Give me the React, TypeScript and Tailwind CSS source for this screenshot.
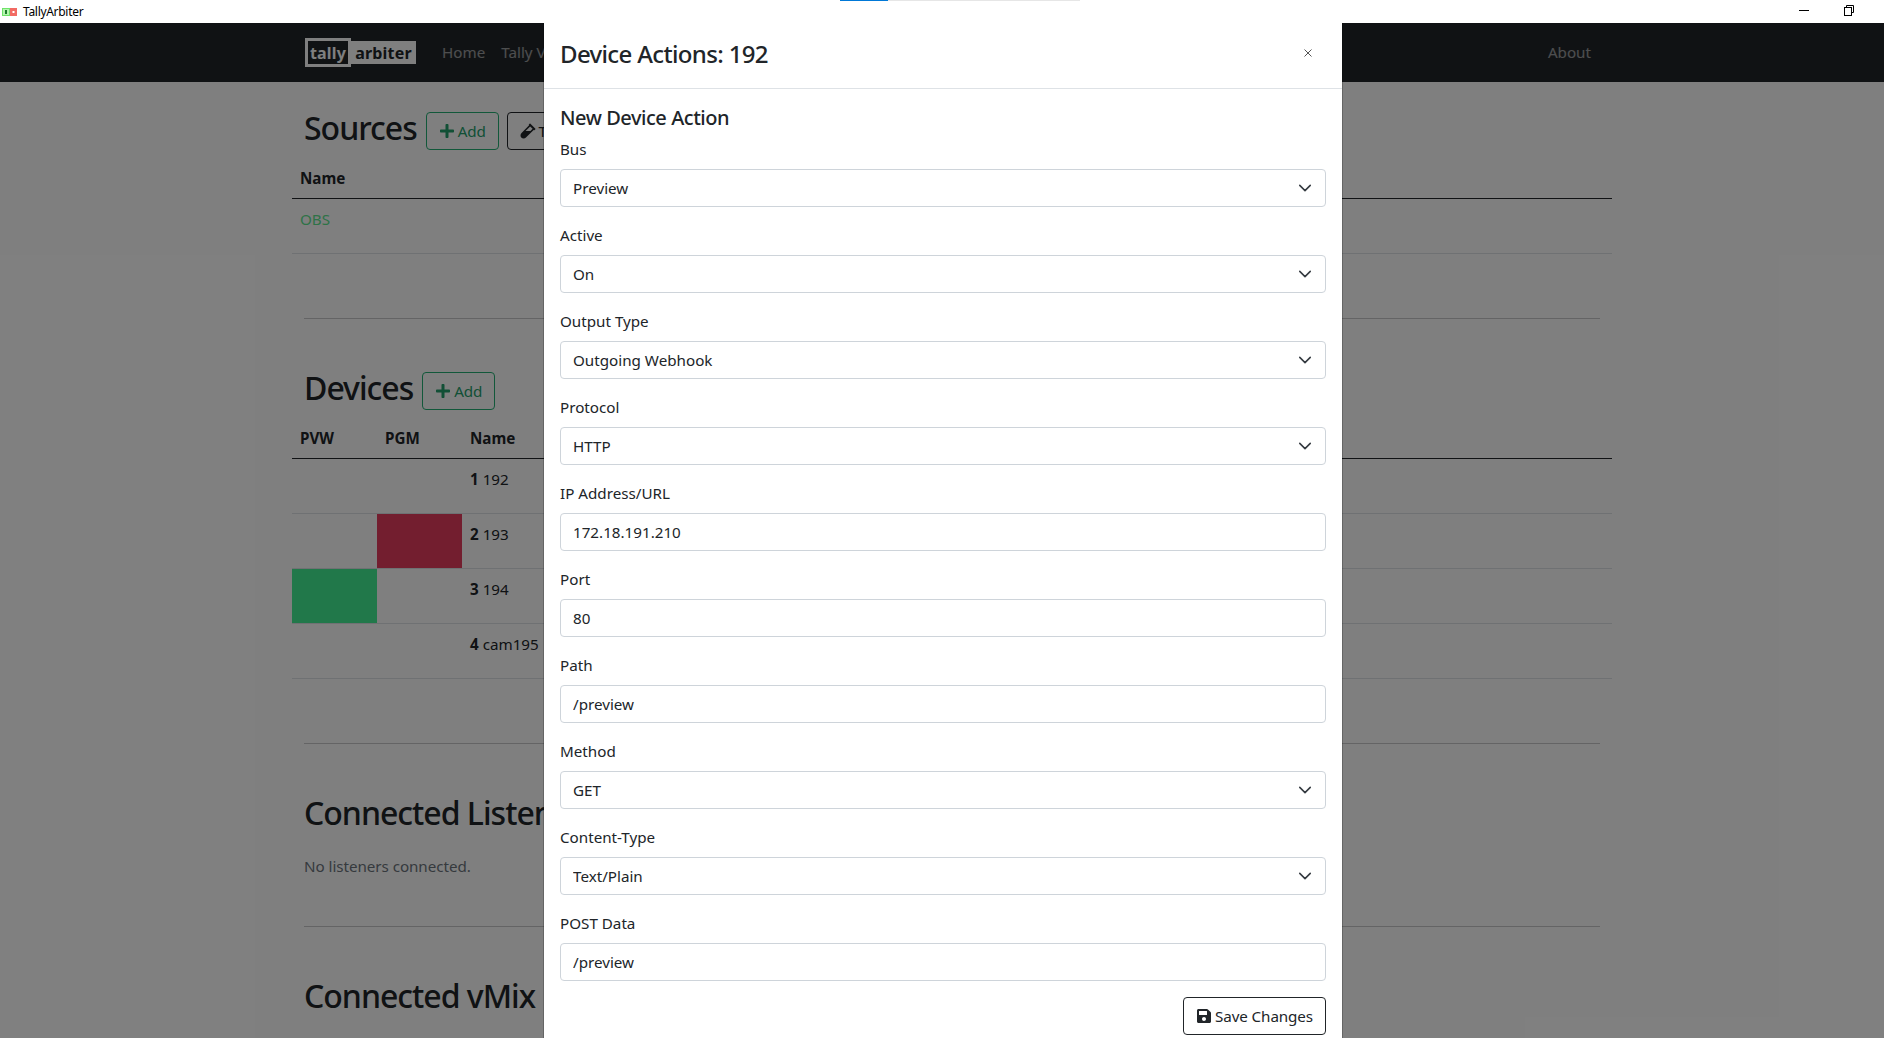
import {FaPlus, FaSave, FaVial} from "react-icons/fa";

type Field = {label: string; value: string; options?: string[]};

const fields: Field[] = [
  {label: "Bus", value: "Preview", options: ["Preview", "Program"]},
  {label: "Active", value: "On", options: ["On", "Off"]},
  {label: "Output Type", value: "Outgoing Webhook", options: ["Outgoing Webhook"]},
  {label: "Protocol", value: "HTTP", options: ["HTTP", "HTTPS"]},
  {label: "IP Address/URL", value: "172.18.191.210"},
  {label: "Port", value: "80"},
  {label: "Path", value: "/preview"},
  {label: "Method", value: "GET", options: ["GET", "POST"]},
  {label: "Content-Type", value: "Text/Plain", options: ["Text/Plain"]},
  {label: "POST Data", value: "/preview"},
];

const devices = [
  {id: 1, name: "192", pvw: false, pgm: false},
  {id: 2, name: "193", pvw: false, pgm: true},
  {id: 3, name: "194", pvw: true, pgm: false},
  {id: 4, name: "cam195", pvw: false, pgm: false},
];

const TitleBar = () => (
  <div className="relative flex h-[23px] items-center bg-white pl-[2px] text-[12px] text-black">
    <svg width="16" height="8" viewBox="0 0 16 8" className="mr-[5px]">
      <rect x="0.5" y="0.5" width="7" height="7" fill="#b6f5b0" stroke="#6fe36a" />
      <rect x="3" y="2" width="2" height="4" fill="#1d7a2c" />
      <rect x="8" y="0" width="7" height="8" fill="#f26a63" />
      <rect x="10.5" y="3" width="2" height="2" fill="#fff" />
    </svg>
    <span className="tracking-[-0.3px]">TallyArbiter</span>
    {/* loading strip at the very top */}
    <div className="absolute left-[840px] top-0 flex h-px">
      <div className="w-[48px] bg-[#0078d7]" />
      <div className="w-[192px] bg-[#e6e6e6]" />
    </div>
    <div className="absolute right-[75px] top-[10px] h-px w-[10px] bg-black" />
    <svg width="10" height="11" viewBox="0 0 10 11" className="absolute right-[30px] top-[5px]">
      <path d="M2.5 2.5V.5h7v7h-2" fill="none" stroke="#000" />
      <rect x="0.5" y="2.5" width="7" height="8" fill="none" stroke="#000" />
    </svg>
  </div>
);

const Logo = () => (
  <div className="flex w-[111px] items-center text-[16px] font-bold leading-none tracking-[0.2px]">
    <span className="flex h-[29px] w-[46px] items-center justify-center border-[3px] border-white bg-[#212529] text-white">
      tally
    </span>
    <span className="flex h-[23px] w-[65px] items-center justify-center bg-white text-[#212529]">arbiter</span>
  </div>
);

const NavBar = () => (
  <nav className="h-[59px] bg-[#212529]">
    <div className="ml-[292px] flex h-full w-[1320px] items-center pl-[13px] pr-[21px] text-[15.2px] text-white/55">
      <Logo />
      <a className="ml-[26px]">Home</a>
      <a className="ml-[16px]">Tally Viewer</a>
      <a className="ml-auto">About</a>
    </div>
  </nav>
);

const SectionHeading = ({children}: {children: React.ReactNode}) => (
  <h2 className="h-[38px] whitespace-nowrap text-[32px] font-medium leading-[38px] tracking-[-1px] text-[#212529]">
    {children}
  </h2>
);

const AddButton = () => (
  <button className="mt-[3px] flex h-[38px] items-center gap-[3px] rounded-[4px] border border-[#24b074] px-3 tracking-[-0.2px] text-[#24a06c]">
    <FaPlus className="h-[16px] w-[16px]" /> Add
  </button>
);

const Page = () => (
  <main className="ml-[292px] w-[1320px] text-[15.2px] text-[#212529]">
    <section className="h-[236px] pt-[27px]">
      <div className="flex px-3">
        <SectionHeading>Sources</SectionHeading>
        <div className="ml-[9px]">
          <AddButton />
        </div>
        <button className="ml-[8px] mt-[3px] flex h-[38px] items-center gap-[3px] rounded-[4px] border border-[#212529] px-3">
          <FaVial className="h-[16px] w-[16px]" /> Test
        </button>
      </div>
      <table className="mt-[8px] w-full border-collapse text-left">
        <thead>
          <tr className="border-b border-[#212529]">
            <th className="h-[40px] px-2 pt-[2px] font-bold">Name</th>
          </tr>
        </thead>
        <tbody>
          <tr className="border-b border-[#dee2e6]">
            <td className="h-[55px] px-2 pb-[7px] pt-[9px] align-top text-[#5ce68f]">OBS</td>
          </tr>
        </tbody>
      </table>
    </section>
    <hr className="mx-3 border-[#c8c9ca]" />
    <section className="h-[424px] pt-[50px]">
      <div className="flex px-3">
        <SectionHeading>Devices</SectionHeading>
        <div className="ml-[9px]">
          <AddButton />
        </div>
      </div>
      <table className="mt-[8px] w-full table-fixed border-collapse text-left">
        <colgroup>
          <col className="w-[85px]" />
          <col className="w-[85px]" />
          <col />
        </colgroup>
        <thead>
          <tr className="border-b border-[#212529]">
            <th className="h-[40px] px-2 pt-[2px] font-bold">PVW</th>
            <th className="h-[40px] px-2 pt-[2px] font-bold">PGM</th>
            <th className="h-[40px] px-2 pt-[2px] font-bold">Name</th>
          </tr>
        </thead>
        <tbody>
          {devices.map(device => (
            <tr key={device.id} className="border-b border-[#dee2e6]">
              <td className={device.pvw ? "h-[55px] bg-[#42f094]" : "h-[55px]"} />
              <td className={device.pgm ? "h-[55px] bg-[#e63d5e]" : "h-[55px]"} />
              <td className="h-[55px] px-2 pb-[7px] pt-[9px] align-top">
                <b className="font-bold">{device.id}</b> {device.name}
              </td>
            </tr>
          ))}
        </tbody>
      </table>
    </section>
    <hr className="mx-3 border-[#c8c9ca]" />
    <section className="h-[182px] px-3 pt-[50px]">
      <SectionHeading>Connected Listeners</SectionHeading>
      <p className="mt-[23px] tracking-[-0.05px] text-[#6c757d]">No listeners connected.</p>
    </section>
    <hr className="mx-3 border-[#c8c9ca]" />
    <section className="px-3 pt-[50px]">
      <SectionHeading>Connected vMix Emulators</SectionHeading>
    </section>
  </main>
);

const FormField = ({field}: {field: Field}) => (
  <div className="mb-4">
    <label className="mb-2 block h-[24px] leading-[24px]">{field.label}</label>
    {field.options ? (
      <div className="relative">
        <select
          defaultValue={field.value}
          className="block h-[38px] w-full appearance-none rounded-[4px] border border-[#ced4da] bg-white px-3 text-[#212529]"
        >
          {field.options.map(option => (
            <option key={option}>{option}</option>
          ))}
        </select>
        <svg
          viewBox="0 0 16 16"
          className="pointer-events-none absolute right-[14px] top-[12px] h-[14px] w-[14px]"
        >
          <path d="m2 5 6 6 6-6" fill="none" stroke="#343a40" strokeWidth="1.8" strokeLinecap="round" strokeLinejoin="round" />
        </svg>
      </div>
    ) : (
      <input
        defaultValue={field.value}
        className="block h-[38px] w-full rounded-[4px] border border-[#ced4da] bg-white px-3 text-[#212529]"
      />
    )}
  </div>
);

const DeviceActionsModal = () => (
  <div className="absolute bottom-0 left-[543px] top-0 w-[800px] overflow-hidden border-x border-black/20 bg-white bg-clip-padding text-[15.2px] text-[#212529]">
    <div className="flex h-[66px] items-center justify-between border-b border-[#dee2e6] px-4 pb-[5px]">
      <h5 className="text-[24px] font-medium leading-[29px] tracking-[-0.65px]">Device Actions: 192</h5>
      <svg viewBox="0 0 8 8" className="mr-[14px] h-[8px] w-[8px]">
        <path d="M.5.5l7 7M7.5.5l-7 7" stroke="#555" fill="none" />
      </svg>
    </div>
    <div className="p-4">
      <h5 className="mb-2 h-[24px] pt-px text-[20px] font-medium leading-[24px] tracking-[-0.45px]">New Device Action</h5>
      {fields.map(field => (
        <FormField key={field.label} field={field} />
      ))}
      <div className="flex justify-end">
        <button className="flex h-[38px] items-center gap-[3px] rounded-[4px] border border-[#212529] px-3 tracking-[-0.1px]">
          <FaSave className="h-[16px] w-[16px]" /> Save Changes
        </button>
      </div>
    </div>
  </div>
);

const App = () => {
  return (
    <div className="h-[1038px] overflow-hidden bg-white font-['Noto_Sans',sans-serif]">
      <TitleBar />
      <div className="relative h-[1015px] overflow-hidden">
        <NavBar />
        <Page />
        <div className="absolute inset-0 bg-black/50" />
        <DeviceActionsModal />
      </div>
    </div>
  );
};

export default App;
